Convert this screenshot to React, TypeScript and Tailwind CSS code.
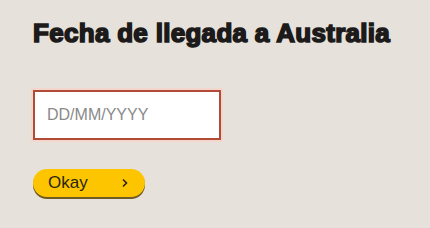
export default function App() {
  return (
    <div className="w-[430px] h-[228px] bg-[#e6e2db] pl-[33px] pt-[18px] font-['Liberation_Sans',Arial,sans-serif]">
      <h1 className="text-[26px] leading-[30px] font-black text-[#1c1a1a] tracking-[0.3px] [-webkit-text-stroke:1.6px_#1c1a1a]">
        Fecha de llegada a Australia
      </h1>
      <div className="mt-[42px] w-[188px] h-[50px] border-2 border-[#b14a36] bg-white shadow-[0_0_0_2px_#f3d6cc] flex items-center px-[12px]">
        <input
          type="text"
          placeholder="DD/MM/YYYY"
          className="w-full outline-none bg-transparent text-[16px] text-[#333] placeholder:text-[#8a8a8a]"
        />
      </div>
      <button className="mt-[29px] w-[112px] h-[28px] rounded-full bg-[#fdc500] shadow-[0_2px_0_#6e5c22] flex items-center justify-between pl-[15px] pr-[16px] text-[17px] text-[#2a2410]">
        <span>Okay</span>
        <svg width="8" height="10" viewBox="0 0 8 10" fill="none">
          <path d="M2 1.5 L5.5 5 L2 8.5" stroke="#2a2410" strokeWidth="1.6" />
        </svg>
      </button>
    </div>
  );
}
